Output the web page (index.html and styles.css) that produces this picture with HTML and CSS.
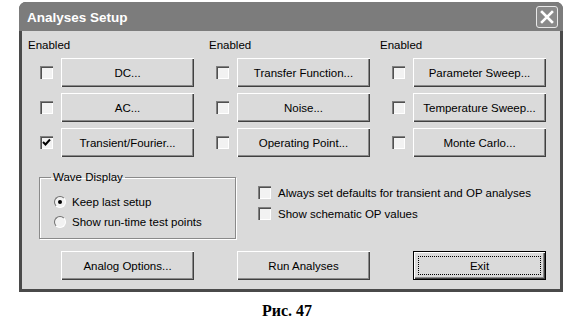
FILE: index.html
```html
<!DOCTYPE html>
<html>
<head>
<meta charset="utf-8">
<link rel="stylesheet" href="styles.css">
</head>
<body>
<div class="page">
  <div class="window">
    <div class="titlebar">
      <span class="title">Analyses Setup</span>
      <span class="close">
        <svg width="14" height="14" viewBox="0 0 14 14"><path d="M2 2 L12 12 M12 2 L2 12" stroke="#fff" stroke-width="2.6" stroke-linecap="square" fill="none"/></svg>
      </span>
    </div>
    <div class="client">
      <div class="cols">
        <div class="col">
          <div class="hdr">Enabled</div>
          <div class="row"><span class="cb"></span><span class="btn">DC...</span></div>
          <div class="row"><span class="cb"></span><span class="btn">AC...</span></div>
          <div class="row"><span class="cb"><svg width="9" height="9" viewBox="0 0 9 9"><path d="M1 4 L3.5 6.5 L8 1.5" stroke="#000" stroke-width="2" fill="none"/></svg></span><span class="btn">Transient/Fourier...</span></div>
        </div>
        <div class="col">
          <div class="hdr hdr2">Enabled</div>
          <div class="row"><span class="cb"></span><span class="btn">Transfer Function...</span></div>
          <div class="row"><span class="cb"></span><span class="btn">Noise...</span></div>
          <div class="row"><span class="cb"></span><span class="btn">Operating Point...</span></div>
        </div>
        <div class="col">
          <div class="hdr">Enabled</div>
          <div class="row"><span class="cb"></span><span class="btn">Parameter Sweep...</span></div>
          <div class="row"><span class="cb"></span><span class="btn">Temperature Sweep...</span></div>
          <div class="row"><span class="cb"></span><span class="btn">Monte Carlo...</span></div>
        </div>
      </div>
      <div class="middle">
        <fieldset class="group">
          <legend>Wave Display</legend>
          <div class="radio-row"><span class="radio on"></span><span>Keep last setup</span></div>
          <div class="radio-row"><span class="radio"></span><span>Show run-time test points</span></div>
        </fieldset>
        <div class="opts">
          <div class="opt"><span class="cb"></span><span>Always set defaults for transient and OP analyses</span></div>
          <div class="opt"><span class="cb"></span><span>Show schematic OP values</span></div>
        </div>
      </div>
      <div class="cols bottom">
        <div class="col"><div class="row"><span class="btn">Analog Options...</span></div></div>
        <div class="col"><div class="row"><span class="btn">Run Analyses</span></div></div>
        <div class="col"><div class="row"><span class="btn default"><span class="focus">Exit</span></span></div></div>
      </div>
    </div>
  </div>
  <div class="caption">Рис. 47</div>
</div>
</body>
</html>
```
FILE: styles.css
```css
body {
  margin: 0;
  background: #fff;
  font-family: "Liberation Sans", Arial, sans-serif;
  font-size: 11.5px;
  color: #000;
}
.page {
  width: 581px;
  height: 332px;
  padding-top: 2px;
  box-sizing: border-box;
}
.window {
  margin-left: 19px;
  width: 544px;
  background: #4a4a4a;
  border-radius: 7px 7px 0 0;
  padding-bottom: 3px;
}
.titlebar {
  height: 29px;
  display: flex;
  align-items: center;
  justify-content: space-between;
  padding: 0 5px 0 8px;
  background: #7c7c7c;
  border-radius: 7px 7px 0 0;
}
.title {
  color: #fff;
  font-weight: bold;
  font-size: 13.5px;
  padding-top: 1px;
}
.close {
  width: 20px;
  height: 20px;
  border: 1px solid #e8e8e8;
  border-radius: 3px;
  background: #8a8a8a;
  display: flex;
  align-items: center;
  justify-content: center;
}
.client {
  margin: 0 3px;
  height: 258px;
  background: #dadada;
  padding: 7px 0 0 6px;
  box-sizing: border-box;
}
.cols {
  display: grid;
  grid-template-columns: 176px 176px 1fr;
}
.hdr {
  height: 14px;
  line-height: 14px;
}
.hdr2 { margin-left: 5px; }
.col {
  display: flex;
  flex-direction: column;
  gap: 6px;
}
.row {
  display: flex;
  align-items: center;
  height: 29px;
}
.cb {
  width: 13px;
  height: 13px;
  box-sizing: border-box;
  background: #f2f2f2;
  box-shadow: inset 1px 1px #808080, inset 2px 2px #505050, inset -1px -1px #fff;
  display: inline-flex;
  align-items: center;
  justify-content: center;
  flex: none;
}
.row .cb { margin-left: 12px; margin-right: 8px; }
.btn {
  width: 133px;
  height: 29px;
  box-sizing: border-box;
  display: flex;
  align-items: center;
  justify-content: center;
  background: #dadada;
  box-shadow: inset 1px 1px #fff, inset -1px -1px #404040, inset -2px -2px #8a8a8a;
}
.bottom .btn { margin-left: 33px; }
.btn.default {
  border: 1px solid #000;
  padding: 4px;
}
.focus {
  flex: 1;
  align-self: stretch;
  display: flex;
  align-items: center;
  justify-content: center;
  border: 1px dotted #000;
}
.middle {
  display: flex;
  margin-top: 13px;
  height: 69px;
}
.group {
  margin: 0 0 0 11px;
  width: 197px;
  height: 69px;
  box-sizing: border-box;
  border: 1px solid #8a8a8a;
  box-shadow: inset 1px 1px #fff, 1px 1px #fff;
  padding: 8px 0 0 14px;
}
.group legend {
  padding: 0 2px;
  margin-left: -3px;
  line-height: 14px;
}
.radio-row {
  display: flex;
  align-items: center;
  height: 20px;
  gap: 6px;
}
.radio {
  width: 12px;
  height: 12px;
  border-radius: 50%;
  box-sizing: border-box;
  background: #f2f2f2;
  border: 1px solid;
  border-color: #707070 #fff #fff #707070;
  display: flex;
  align-items: center;
  justify-content: center;
}
.radio.on::after {
  content: "";
  width: 4px;
  height: 4px;
  border-radius: 50%;
  background: #000;
}
.opts {
  margin-left: 22px;
  padding-top: 16px;
  display: flex;
  flex-direction: column;
  gap: 8px;
}
.opt {
  display: flex;
  align-items: center;
  gap: 7px;
  height: 13px;
}
.bottom {
  margin-top: 12px;
}
.caption {
  margin-top: 10px;
  padding-left: 262px;
  font-family: "Liberation Serif", "Times New Roman", serif;
  font-weight: bold;
  font-size: 16px;
  line-height: 18px;
}
```
